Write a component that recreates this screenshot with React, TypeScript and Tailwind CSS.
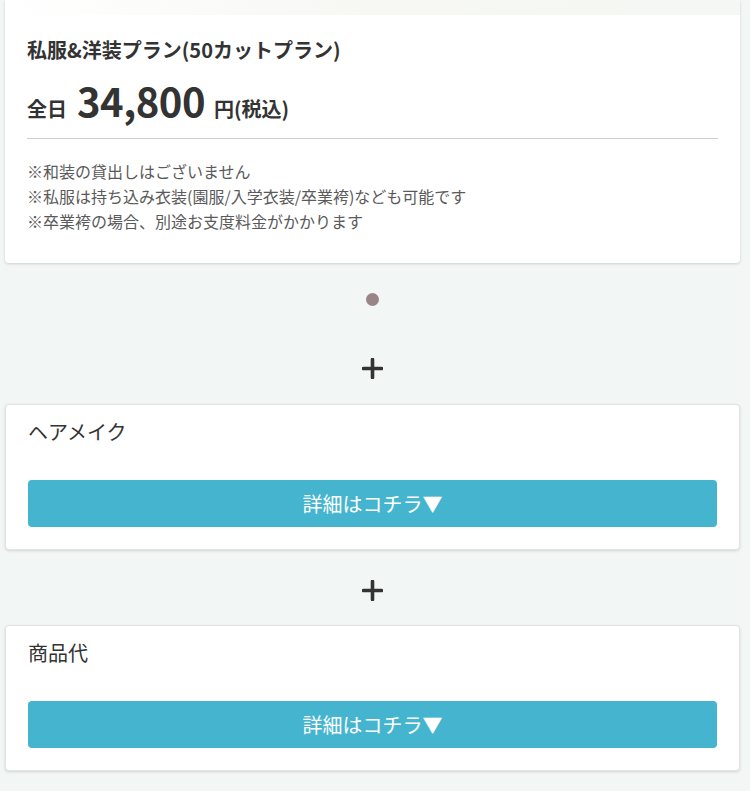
const font = "font-['Noto_Sans_CJK_JP','Noto_Sans',sans-serif]";

const Plus = () => (
  <svg width="21" height="21" viewBox="0 0 21 21" className="block">
    <path d="M10.5 1.5v18M1.5 10.5h18" stroke="#333" strokeWidth="3.6" strokeLinecap="round" />
  </svg>
);

const OptionCard = ({ title }: { title: string }) => (
  <div className="ml-[5px] w-[735px] rounded-[4px] border border-[#e2e4e3] bg-white px-[22px] pt-[13px] pb-[22px] shadow-[0_1px_3px_rgba(0,0,0,0.14)]">
    <p className="text-[20px] leading-[28px] text-[#333]">{title}</p>
    <button className="mt-[34px] flex h-[47px] w-full items-center justify-center rounded-[4px] bg-[#45b5cf] text-[20px] text-white">
      詳細はコチラ▼
    </button>
  </div>
);

export default function App() {
  return (
    <div className={`${font} min-h-[791px] w-[750px] overflow-hidden bg-[#f2f7f6]`}>
      {/* plan card */}
      <div className="ml-[5px] w-[735px] rounded-b-[4px] bg-white shadow-[0_1px_3px_rgba(0,0,0,0.16)]">
        <div className="h-[15px] bg-gradient-to-r from-white via-[#f7f8f4] to-[#f4f7f3]" />
        <div className="px-[22px] pt-[21px] pb-[29px]">
          <h2 className="text-[20px] font-bold leading-[28px] text-[#333]">
            私服&amp;洋装プラン(50カットプラン)
          </h2>
          <div className="mt-[12px] flex h-[48px] items-baseline font-bold text-[#333]">
            <span className="text-[20px]">全日</span>
            <span className="ml-[10px] text-[40px] leading-[48px] tracking-[-0.5px]">34,800</span>
            <span className="ml-[9px] text-[20px]">円(税込)</span>
          </div>
          <div className="mt-[14px] h-px bg-[#cfcfcf]" />
          <div className="mt-[20px] text-[16px] leading-[25px] text-[#5a5a5a]">
            <p>※和装の貸出しはございません</p>
            <p>※私服は持ち込み衣装(園服/入学衣装/卒業袴)なども可能です</p>
            <p>※卒業袴の場合、別途お支度料金がかかります</p>
          </div>
        </div>
      </div>

      <div className="ml-[5px] flex w-[735px] flex-col items-center">
        <div className="mt-[30px] h-[13px] w-[13px] rounded-full bg-[#9a8487]" />
        <div className="mt-[52px] mb-[25px]">
          <Plus />
        </div>
      </div>

      <OptionCard title="ヘアメイク" />

      <div className="ml-[5px] flex w-[735px] justify-center pt-[30px] pb-[24px]">
        <Plus />
      </div>

      <OptionCard title="商品代" />
    </div>
  );
}
